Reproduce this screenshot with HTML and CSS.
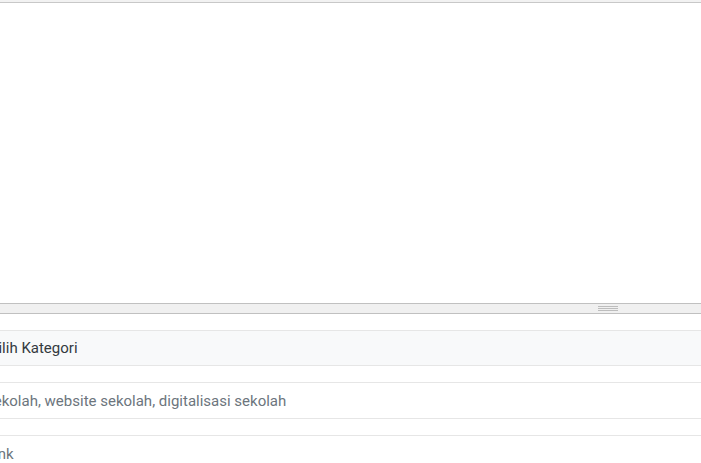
FILE: index.html
```html
<!DOCTYPE html>
<html lang="id">
<head>
    <meta charset="UTF-8">
    <meta name="viewport" content="width=device-width, initial-scale=1.0">
    <title>Tulis Artikel</title>
    <link rel="stylesheet" href="styles.css">
</head>
<body>
    <div class="page">
        <!-- editor -->
        <div class="editor">
            <div class="editor-top"></div>
            <div class="editor-body" contenteditable="true"></div>
            <div class="editor-status">
                <div class="grip">
                    <span></span>
                    <span></span>
                    <span></span>
                </div>
            </div>
        </div>

        <!-- form -->
        <div class="form-group">
            <select class="form-control select">
                <option>Pilih Kategori</option>
            </select>
        </div>

        <div class="form-group">
            <input type="text" class="form-control text" placeholder="sekolah, website sekolah, digitalisasi sekolah">
        </div>

        <div class="form-group">
            <input type="text" class="form-control text" placeholder="Link">
        </div>
    </div>
</body>
</html>
```

FILE: styles.css
```css
body {
    margin: 0;
    padding: 0;
    background-color: white;
    font-family: Roboto, "Noto Sans", sans-serif;
    overflow: hidden;
}

.page {
    margin-left: -27px;
    width: 768px;
}

.editor-top {
    height: 2px;
    background-color: #f2f2f2;
    border-bottom: 1px solid #c8c8c8;
}

.editor-body {
    height: 300px;
    background-color: white;
    outline: none;
}

.editor-status {
    height: 9px;
    background-color: #f0f0f0;
    border-top: 1px solid #c0c0c0;
    border-bottom: 1px solid #c0c0c0;
    display: flex;
    justify-content: flex-end;
    padding-right: 123px;
}

.grip {
    width: 20px;
    padding-top: 2px;
    display: flex;
    flex-direction: column;
    gap: 1px;
}

.grip span {
    display: block;
    height: 1px;
    background-color: #bdbdbd;
}

.form-group {
    margin-top: 16px;
}

.form-control {
    display: block;
    box-sizing: border-box;
    width: 100%;
    height: 36px;
    padding: 0 12px;
    font-family: Roboto, "Noto Sans", sans-serif;
    font-size: 15px;
    color: #343a40;
    background-color: white;
    border: 1px solid #e6e6e6;
    border-radius: 0;
    outline: none;
}

.form-control.text {
    height: 37px;
}

.form-control::placeholder {
    color: #6c757d;
}

.select {
    appearance: none;
    padding-left: 15px;
    background-color: #f8f9fa;
}
```
